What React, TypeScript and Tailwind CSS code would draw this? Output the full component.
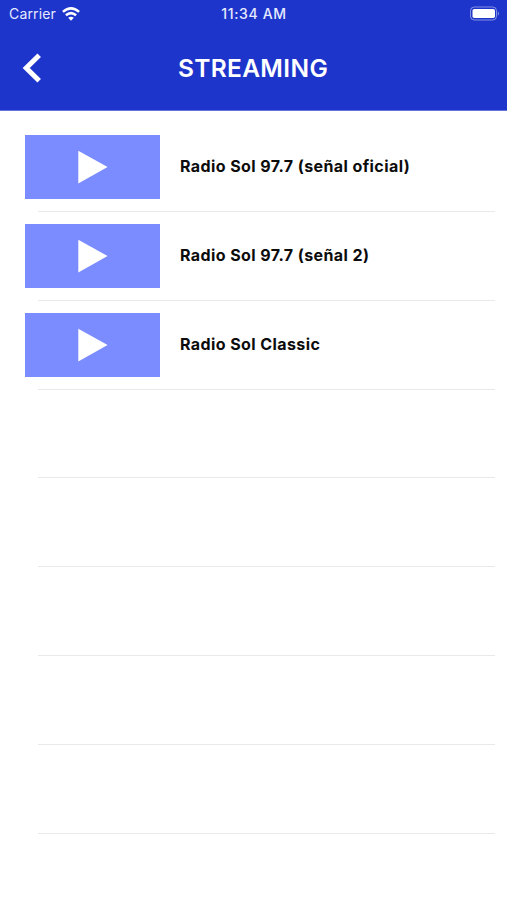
import React from 'react';

const stations = [
    'Radio Sol 97.7 (señal oficial)',
    'Radio Sol 97.7 (señal 2)',
    'Radio Sol Classic',
]

const ROW_COUNT = 8

const StatusBar: React.FC = () => {
    return (
        <div className="grid grid-cols-3 items-center h-[27px] pl-[9px] pr-[7px] font-['Inter',sans-serif] text-[14px] text-[#e6eaff]">
            <div className="flex items-center gap-[6px]">
                <span className="tracking-[0.15px]">Carrier</span>
                <svg width="18" height="14" viewBox="0 0 18 14" fill="none" stroke="white" strokeWidth="2.5">
                    <path d="M0.9 4.9 Q9 -2.1 17.1 4.9" />
                    <path d="M3.9 8.3 Q9 3.9 14.1 8.3" />
                    <path d="M9 13.7 L6.2 10.8 Q9 8.6 11.8 10.8 Z" fill="white" stroke="none" />
                </svg>
            </div>
            <span className="text-center font-medium whitespace-nowrap tracking-[0.65px] pr-px">11:34 AM</span>
            <svg className="justify-self-end" width="31" height="15" viewBox="0 0 31 15" fill="none">
                <rect x="1.5" y="1" width="26" height="13" rx="3.8" stroke="white" strokeOpacity="0.45" />
                <rect x="3.5" y="3" width="22.5" height="9" rx="1.8" fill="white" />
                <path d="M28.8 5.2 Q31 7.5 28.8 9.8 Z" fill="white" fillOpacity="0.5" />
            </svg>
        </div>
    );
};

const Header: React.FC = () => {
    return (
        <header className="h-[111px] bg-[#1e35cb] text-white border-b border-[#6374dc]">
            <StatusBar />
            <div className="grid grid-cols-[1fr_auto_1fr] items-center h-[82px] px-[22px]">
                <button aria-label="Back">
                    <svg width="20" height="30" viewBox="0 0 20 30" fill="none" stroke="white" strokeWidth="5">
                        <path d="M17.2 2.2 L4.2 15 L17.2 27.8" />
                    </svg>
                </button>
                <h1 className="text-[24.5px] font-semibold font-['Inter',sans-serif] tracking-[0.35px] pt-px pr-px">STREAMING</h1>
                <span></span>
            </div>
        </header>
    );
};

const StationRow: React.FC<{ title?: string }> = ({ title }) => {
    return (
        <li className="h-[88.8px] pl-[25px] pr-3 flex flex-col">
            <div className="flex-1 flex items-center gap-5">
                {title && (
                    <>
                        <div className="w-[135px] h-[64px] bg-[#7a8cff] flex items-center justify-center">
                            <svg width="30" height="34" viewBox="0 0 30 34">
                                <path d="M0.3 0.8 L29.6 17 L0.3 33.4 Z" fill="white" />
                            </svg>
                        </div>
                        <span className="text-[16px] font-bold font-['Inter',sans-serif] tracking-[0.41px] text-[#0c0c0c] -mt-[1.5px]">{title}</span>
                    </>
                )}
            </div>
            <div className="ml-[13px] h-px bg-[#e9e9eb]" />
        </li>
    );
};

const App: React.FC = () => {
    return (
        <div className="w-full h-screen bg-white overflow-hidden">
            <Header />
            <ul className="pt-[12.2px]">
                {Array.from({ length: ROW_COUNT }, (_, i) => (
                    <StationRow key={i} title={stations[i]} />
                ))}
            </ul>
        </div>
    );
};

export default App;
